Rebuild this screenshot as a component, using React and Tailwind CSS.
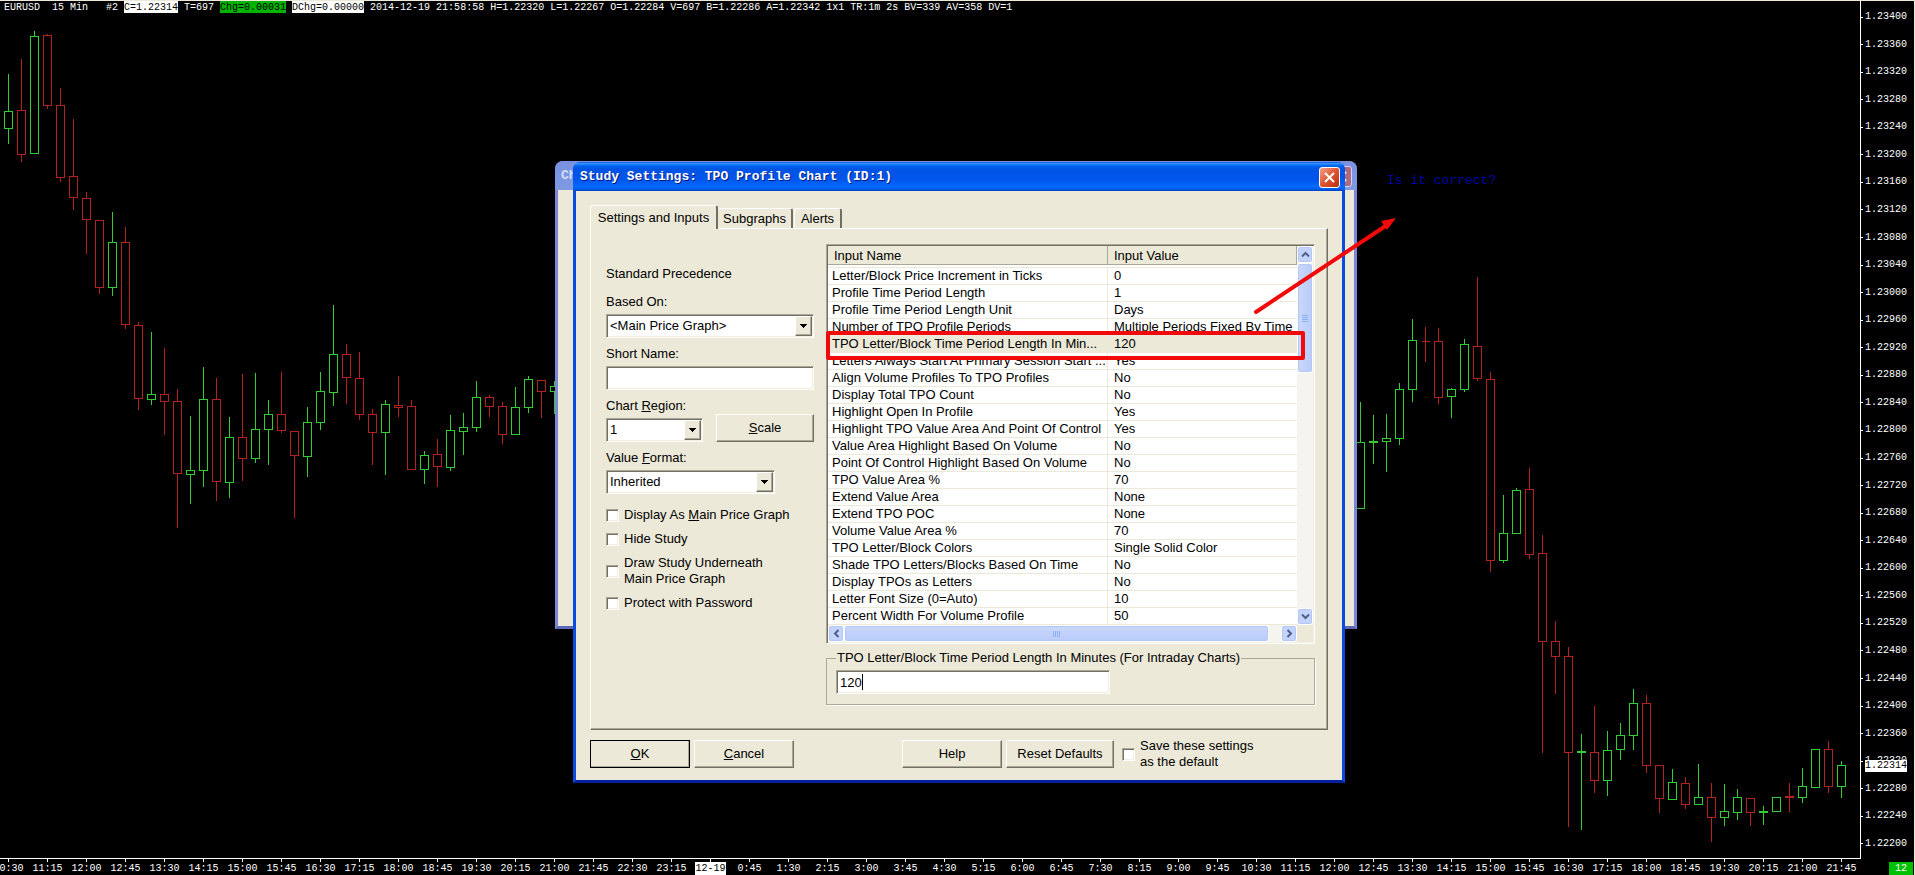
import React from 'react';
import { clsx } from 'clsx';

// Candles are [up, high, bodyTop, bodyBottom, low], 13px apart
const STEP = 13;

const leftCandles = [
  [1, 73, 111, 128, 143], [0, 58, 110, 154, 161], [1, 30, 36, 153, 153], [0, 33, 35, 105, 108],
  [0, 87, 105, 177, 181], [0, 118, 176, 197, 209], [0, 191, 198, 219, 253], [0, 219, 220, 287, 293],
  [1, 211, 242, 287, 295], [0, 226, 242, 324, 328], [0, 321, 325, 398, 409], [1, 331, 394, 399, 404],
  [0, 347, 394, 401, 434], [0, 388, 401, 473, 527], [1, 415, 470, 474, 503], [1, 366, 399, 470, 486],
  [0, 377, 399, 481, 500], [1, 416, 437, 482, 497], [0, 373, 437, 458, 480], [1, 372, 429, 458, 462],
  [1, 399, 414, 429, 464], [0, 371, 414, 430, 432], [0, 431, 431, 455, 517], [1, 406, 422, 456, 476],
  [1, 371, 391, 422, 429], [1, 304, 354, 392, 405], [0, 343, 354, 377, 403], [0, 351, 378, 414, 419],
  [0, 408, 414, 432, 464], [1, 399, 404, 432, 474], [0, 375, 405, 407, 416], [0, 399, 406, 469, 469],
  [1, 450, 455, 469, 483], [0, 438, 454, 466, 486], [1, 414, 430, 467, 470], [1, 412, 427, 431, 454],
  [1, 380, 397, 427, 431], [0, 394, 397, 406, 416], [0, 401, 406, 434, 443], [1, 386, 407, 434, 434],
  [1, 375, 379, 407, 412], [0, 380, 380, 391, 417], [1, 380, 386, 391, 413],
];

const rightCandles = [
  [1, 401, 442, 508, 508], [1, 414, 441, 442, 463], [1, 413, 438, 441, 471], [1, 382, 389, 438, 444],
  [1, 318, 340, 389, 401], [0, 326, 341, 341, 361], [0, 327, 341, 397, 403], [1, 387, 389, 396, 417],
  [1, 338, 344, 389, 391], [0, 276, 346, 378, 380], [0, 371, 379, 560, 571], [1, 494, 533, 560, 562],
  [1, 487, 490, 533, 533], [0, 467, 489, 554, 558], [0, 534, 553, 641, 752], [0, 620, 641, 656, 693],
  [0, 646, 656, 752, 826], [1, 733, 751, 752, 829], [0, 705, 752, 780, 792], [1, 730, 750, 780, 795],
  [1, 722, 735, 749, 759], [1, 688, 703, 735, 749], [0, 694, 703, 765, 772], [0, 765, 765, 798, 812],
  [1, 768, 782, 799, 799], [0, 776, 783, 804, 808], [1, 763, 797, 804, 804], [0, 782, 797, 817, 841],
  [1, 783, 811, 817, 825], [1, 788, 797, 812, 819], [0, 798, 798, 812, 825], [1, 805, 811, 812, 824],
  [1, 796, 797, 811, 811], [0, 782, 796, 797, 811], [1, 767, 786, 797, 802], [1, 748, 749, 787, 787],
  [0, 740, 749, 786, 792], [1, 760, 765, 786, 797],
];

const prices = Array.from({ length: 31 }, (_, i) => ((123400 - i * 40) / 100000).toFixed(5));

const times = Array.from({ length: 48 }, (_, i) => {
  const minutes = 10 * 60 + 30 + i * 45;
  if (minutes === 24 * 60) return '12-19';
  return `${Math.floor(minutes / 60) % 24}:${String(minutes % 60).padStart(2, '0')}`;
});

const inputs = [
  ['Letter/Block Price Increment in Ticks', '0'],
  ['Profile Time Period Length', '1'],
  ['Profile Time Period Length Unit', 'Days'],
  ['Number of TPO Profile Periods', 'Multiple Periods Fixed By Time'],
  ['TPO Letter/Block Time Period Length In Min...', '120'],
  ['Letters Always Start At Primary Session Start ...', 'Yes'],
  ['Align Volume Profiles To TPO Profiles', 'No'],
  ['Display Total TPO Count', 'No'],
  ['Highlight Open In Profile', 'Yes'],
  ['Highlight TPO Value Area And Point Of Control', 'Yes'],
  ['Value Area Highlight Based On Volume', 'No'],
  ['Point Of Control Highlight Based On Volume', 'No'],
  ['TPO Value Area %', '70'],
  ['Extend Value Area', 'None'],
  ['Extend TPO POC', 'None'],
  ['Volume Value Area %', '70'],
  ['TPO Letter/Block Colors', 'Single Solid Color'],
  ['Shade TPO Letters/Blocks Based On Time', 'No'],
  ['Display TPOs as Letters', 'No'],
  ['Letter Font Size (0=Auto)', '10'],
  ['Percent Width For Volume Profile', '50'],
];

const sunken =
  'border border-t-[#aca899] border-l-[#aca899] border-r-white border-b-white shadow-[inset_1px_1px_0_#716f64,inset_-1px_-1px_0_#f1efe2]';
const raised =
  'border border-t-white border-l-white border-r-[#716f64] border-b-[#716f64] shadow-[inset_-1px_-1px_0_#aca899]';

function Candles({ data, start }) {
  return data.map(([up, high, top, bottom, low], i) => {
    const x = 8 + (start + i) * STEP;
    return (
      <path
        key={x}
        d={`M${x} ${high}V${top}M${x - 4} ${top}h8V${bottom}h-8ZM${x} ${bottom}V${low}`}
        stroke={up ? '#32cd32' : '#b22222'}
      />
    );
  });
}

function StatusLine() {
  return (
    <div className="absolute top-0 left-1 h-3 text-[10px] leading-[13px] whitespace-pre text-white">
      {'EURUSD  15 Min   #2 '}
      <span className="inline-block h-3 bg-white text-black">C=1.22314</span>
      {' T=697 '}
      <span className="inline-block h-3 bg-[#00b400] text-black">Chg=0.00031</span>{' '}
      <span className="inline-block h-3 bg-white text-black">DChg=0.00000</span>
      {' 2014-12-19 21:58:58 H=1.22320 L=1.22267 O=1.22284 V=697 B=1.22286 A=1.22342 1x1 TR:1m 2s BV=339 AV=358 DV=1'}
    </div>
  );
}

function Chart() {
  return (
    <div className="flex min-h-screen flex-col overflow-hidden border-t border-r border-[#ece9d8] font-['Liberation_Mono',monospace]">
      <div className="flex flex-1">
        <div className="relative min-w-0 flex-1 overflow-hidden border-b border-white">
          <svg className="absolute inset-0 size-full" fill="none" shapeRendering="crispEdges">
            <g transform="translate(0.5 -0.5)">
              <Candles data={leftCandles} start={0} />
              <Candles data={rightCandles} start={104} />
            </g>
          </svg>
          <StatusLine />
        </div>
        <div className="relative flex w-[54px] flex-col justify-between border-l border-white pt-[10px] pb-[9px] text-[10px] leading-3 text-white">
          {prices.map((price) => (
            <div key={price} className="flex h-3 items-center gap-[2px]">
              <span className="h-px w-[2px] bg-white" />
              {price}
            </div>
          ))}
          <span className="absolute bottom-[87px] left-1 h-3 bg-white text-black">1.22314</span>
        </div>
      </div>
      <div className="flex h-4 justify-between">
        <div className="-ml-[11px] flex min-w-0 flex-1 overflow-hidden text-[10px] leading-[13px] text-white">
          {times.map((time) => (
            <div key={time} className="flex w-[39px] shrink-0 flex-col items-center">
              <span className="h-[3px] w-px bg-white" />
              <span className={clsx('h-[13px]', time === '12-19' && 'bg-white text-black')}>{time}</span>
            </div>
          ))}
        </div>
        <span className="mt-[3px] mr-px h-[13px] w-6 bg-[#00c000] text-center text-[10px] leading-[13px] text-white">12</span>
      </div>
    </div>
  );
}

function Select({ id, value, className }) {
  return (
    <div className={clsx('relative h-6', className)}>
      <select id={id} defaultValue={value} className={clsx('block h-6 w-full appearance-none rounded-none bg-white pl-[3px]', sunken)}>
        <option>{value}</option>
      </select>
      <span className={clsx('pointer-events-none absolute inset-y-[2px] right-[2px] flex w-[17px] items-center justify-center bg-[#ece9d8]', raised)}>
        <svg width="7" height="4" shapeRendering="crispEdges">
          <path d="M0 0h7L3.5 4z" fill="#000" />
        </svg>
      </span>
    </div>
  );
}

function Check({ children }) {
  return (
    <label className="flex items-center gap-[5px]">
      <input type="checkbox" className={clsx('size-[13px] shrink-0 appearance-none rounded-none bg-white', sunken)} />
      <span>{children}</span>
    </label>
  );
}

function Button({ className, children }) {
  return (
    <button type="button" className={clsx('h-7 bg-[#ece9d8]', raised, className)}>
      {children}
    </button>
  );
}

function ScrollButton({ d, label }) {
  return (
    <button
      type="button"
      aria-label={label}
      className="flex h-[17px] w-4 shrink-0 items-center justify-center rounded-[3px] border border-white bg-[#c3d3fd] shadow-[inset_0_0_0_1px_#b4c8f6]"
    >
      <svg width="9" height="9" viewBox="0 0 9 9" fill="none" stroke="#4d6185" strokeWidth="2">
        <path d={d} />
      </svg>
    </button>
  );
}

function InputList() {
  return (
    <div className={clsx('bg-white p-px', sunken)}>
      <div className="flex">
        <table className="w-full min-w-0 flex-1 table-fixed border-separate border-spacing-0 text-left">
          <colgroup>
            <col className="w-[280px]" />
            <col />
          </colgroup>
          <thead>
            <tr>
              {['Input Name', 'Input Value'].map((name) => (
                <th key={name} className="border-b border-[#ece9d8] p-0 pb-[2px] font-normal">
                  <div className="h-[19px] border-r border-b border-[#aca899] bg-[#ece9d8] pl-[6px] leading-5">{name}</div>
                </th>
              ))}
            </tr>
          </thead>
          <tbody>
            {inputs.map(([name, value], i) => (
              <tr key={name} className={clsx(i === 4 && 'bg-[#ece9d8]')}>
                <td className="h-[17px] overflow-hidden border-r border-b border-[#ece9d8] p-0 pl-1 leading-4 whitespace-nowrap">{name}</td>
                <td className="h-[17px] overflow-hidden border-b border-[#ece9d8] p-0 pl-[6px] leading-4 whitespace-nowrap">{value}</td>
              </tr>
            ))}
          </tbody>
        </table>
        <div className="flex w-4 flex-col bg-[#f5f4ee]">
          <ScrollButton label="Scroll up" d="M1 6.5 4.5 3 8 6.5" />
          <div className="flex h-[110px] flex-col items-center justify-center gap-px rounded-[3px] border border-white bg-linear-to-r from-[#c9d8fc] to-[#b9cbf9] shadow-[inset_0_0_0_1px_#b4c8f6]">
            <span className="h-px w-[6px] bg-[#8cb0f8]" />
            <span className="h-px w-[6px] bg-[#8cb0f8]" />
            <span className="h-px w-[6px] bg-[#8cb0f8]" />
            <span className="h-px w-[6px] bg-[#8cb0f8]" />
          </div>
          <div className="flex-1" />
          <ScrollButton label="Scroll down" d="M1 2.5 4.5 6 8 2.5" />
        </div>
      </div>
      <div className="flex bg-[#f5f4ee]">
        <ScrollButton label="Scroll left" d="M6.5 1 3 4.5 6.5 8" />
        <div className="flex h-[17px] w-[425px] items-center justify-center gap-px rounded-[3px] border border-white bg-linear-to-b from-[#c9d8fc] to-[#b9cbf9] shadow-[inset_0_0_0_1px_#b4c8f6]">
          <span className="h-[6px] w-px bg-[#8cb0f8]" />
          <span className="h-[6px] w-px bg-[#8cb0f8]" />
          <span className="h-[6px] w-px bg-[#8cb0f8]" />
          <span className="h-[6px] w-px bg-[#8cb0f8]" />
        </div>
        <div className="flex-1" />
        <ScrollButton label="Scroll right" d="M2.5 1 6 4.5 2.5 8" />
        <div className="w-4 bg-[#ece9d8]" />
      </div>
    </div>
  );
}

function SettingsColumn() {
  return (
    <div className="w-[208px] pt-[22px]">
      <p className="mb-3">Standard Precedence</p>
      <div className="flex flex-col gap-2">
        <div className="flex flex-col gap-1">
          <label htmlFor="based-on">Based On:</label>
          <Select id="based-on" value="<Main Price Graph>" />
        </div>
        <div className="flex flex-col gap-1">
          <label htmlFor="short-name">Short Name:</label>
          <input id="short-name" type="text" className={clsx('h-6 bg-white px-1', sunken)} />
        </div>
        <div className="flex items-end justify-between">
          <div className="flex flex-col gap-1">
            <label htmlFor="chart-region">
              Chart <u>R</u>egion:
            </label>
            <Select id="chart-region" value="1" className="w-[97px]" />
          </div>
          <Button className="w-[98px]">
            <u>S</u>cale
          </Button>
        </div>
        <div className="flex flex-col gap-1">
          <label htmlFor="value-format">
            Value <u>F</u>ormat:
          </label>
          <Select id="value-format" value="Inherited" className="w-[169px]" />
        </div>
      </div>
      <div className="mt-[13px] flex flex-col gap-2">
        <Check>
          Display As <u>M</u>ain Price Graph
        </Check>
        <Check>Hide Study</Check>
        <Check>
          Draw Study Underneath
          <br />
          Main Price Graph
        </Check>
        <Check>Protect with Password</Check>
      </div>
    </div>
  );
}

function StudyDialog() {
  return (
    <div
      role="dialog"
      aria-labelledby="dialog-title"
      className="relative ml-[18px] w-[772px] rounded-t-lg bg-[#0a4be0] font-['Liberation_Sans',sans-serif] text-[13px] leading-4 text-black"
    >
      <div className="flex h-[29px] items-center justify-between rounded-t-lg bg-[linear-gradient(180deg,#0050d8_0%,#3a93ff_5%,#127dff_9%,#0262ee_14%,#0054e3_24%,#0055eb_60%,#026afe_86%,#0062ef_92%,#0043c0_100%)] pt-px pr-[5px] pl-[7px]">
        <h1 id="dialog-title" className="font-['Liberation_Mono',monospace] text-[13px] font-bold whitespace-pre text-white [text-shadow:1px_1px_0_#0a1883]">
          Study Settings: TPO Profile Chart (ID:1)
        </h1>
        <button
          type="button"
          aria-label="Close"
          className="flex size-[21px] items-center justify-center rounded-[3px] border border-white bg-linear-to-br from-[#f0a18a] via-[#e0532f] to-[#b8300c]"
        >
          <svg width="11" height="11" stroke="#fff" strokeWidth="2">
            <path d="M1 1 10 10M10 1 1 10" />
          </svg>
        </button>
      </div>
      <div className="border-x-[3px] border-b-[3px] border-x-[#0a4be0] border-b-[#0020a0] bg-[#ece9d8] px-[14px] pt-[14px] pb-3">
        <div role="tablist" className="flex h-[23px] items-end">
          <button type="button" role="tab" aria-selected="true" className="relative -mb-px h-6 w-32 rounded-t-[3px] border-t border-r-2 border-l border-t-white border-r-[#716f64] border-l-white bg-[#ece9d8]">
            Settings and Inputs
          </button>
          <button type="button" role="tab" aria-selected="false" className="h-5 w-[75px] rounded-t-[3px] border-t border-r-2 border-t-white border-r-[#716f64]">
            Subgraphs
          </button>
          <button type="button" role="tab" aria-selected="false" className="ml-px h-5 w-12 rounded-t-[3px] border-t border-r-2 border-l border-t-white border-r-[#716f64] border-l-white">
            Alerts
          </button>
        </div>
        <div className={clsx('flex gap-3 pt-[15px] pr-3 pb-6 pl-[15px]', raised)}>
          <SettingsColumn />
          <div className="flex min-w-0 flex-1 flex-col gap-[6px]">
            <InputList />
            <fieldset className="border border-[#aca899] px-[9px] pb-[10px] shadow-[1px_1px_0_#fff]">
              <legend className="px-px">
                <label htmlFor="input-value">TPO Letter/Block Time Period Length In Minutes (For Intraday Charts)</label>
              </legend>
              <div className="relative mt-1 w-[274px]">
                <input id="input-value" type="text" defaultValue="120" className={clsx('block h-6 w-full bg-white pl-[3px]', sunken)} />
                <span className="absolute top-1 left-[26px] h-4 w-px bg-black" />
              </div>
            </fieldset>
          </div>
        </div>
        <div className="mt-[10px] flex h-7 items-center">
          <button type="button" className={clsx('h-7 w-[100px] bg-[#ece9d8]', raised, 'outline outline-1 -outline-offset-1 outline-black')}>
            <u>O</u>K
          </button>
          <Button className="ml-1 w-[100px]">
            <u>C</u>ancel
          </Button>
          <Button className="ml-[108px] w-[100px]">Help</Button>
          <Button className="mr-2 ml-1 w-[108px]">Reset Defaults</Button>
          <Check>
            Save these settings
            <br />
            as the default
          </Check>
        </div>
      </div>
      {/* marker round the selected row */}
      <div className="pointer-events-none absolute top-[169px] left-[253px] h-[29px] w-[479px] rounded-[2px] border-4 border-[#f00a0a]" />
    </div>
  );
}

export default function App() {
  return (
    <main className="relative min-h-screen overflow-hidden bg-black">
      <Chart />
      <div className="absolute inset-0 flex justify-center pt-[161px] pr-[3px]">
        <div className="relative w-[802px] shrink-0 pt-px">
          {/* inactive window behind */}
          <div className="absolute inset-x-0 top-0 flex h-[468px] flex-col rounded-t-lg bg-[#7b86d6]">
            <div className="flex h-[29px] items-center justify-between rounded-t-lg bg-linear-to-b from-[#7a90dd] via-[#7a96e4] to-[#8199e0] px-[5px] pt-px">
              <span className="pl-px font-['Liberation_Mono',monospace] text-[13px] font-bold text-[#d5e0f8]">Ch</span>
              <span className="flex size-[21px] items-center justify-center rounded-[3px] border border-[#d0d4f0] bg-[#b06a80] text-white">
                <svg width="11" height="11" stroke="#fff" strokeWidth="2">
                  <path d="M1 1 10 10M10 1 1 10" />
                </svg>
              </span>
            </div>
            <div className="flex-1 border-x-[3px] border-b-[3px] border-[#7b86d6] border-b-[#5f68b8] bg-[#ece9d8]" />
          </div>
          <StudyDialog />
          <p className="absolute top-3 left-[832px] font-['Liberation_Mono',monospace] text-[13px] leading-4 whitespace-nowrap text-[#0000a8]">
            Is it correct?
          </p>
          <svg className="absolute top-[50px] left-[695px]" width="150" height="110" fill="none">
            <path d="M6 101 137 14" stroke="#f00a0a" strokeWidth="4" strokeLinecap="round" />
            <path d="M146 7 131 10 137 19Z" fill="#f00a0a" />
          </svg>
        </div>
      </div>
    </main>
  );
}
